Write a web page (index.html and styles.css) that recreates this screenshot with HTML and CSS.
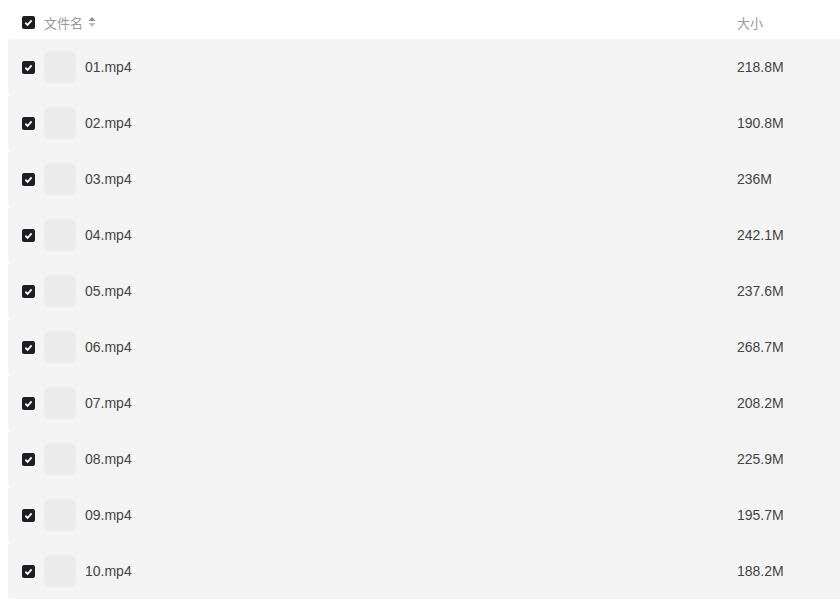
FILE: index.html
```html
<!DOCTYPE html>
<html lang="zh-CN">
<head>
    <meta charset="UTF-8">
    <title>文件列表</title>
    <link rel="stylesheet" href="styles.css">
</head>
<body>
    <div class="file-table">
        <div class="table-head">
            <span class="check"><svg viewBox="0 0 10 10"><path d="M2.6 5.2 L4.3 6.8 L7.4 3.4" /></svg></span>
            <div class="name-col">
                <span>文件名</span>
                <svg class="sort" viewBox="0 0 8 12"><path d="M4 1 L7.5 5 L0.5 5 Z" fill="#8f8f8f"/><path d="M4 11 L7.5 7 L0.5 7 Z" fill="#bdbdbd"/></svg>
            </div>
            <div class="size-col">大小</div>
        </div>

        <div class="rows">
            <div class="row"><span class="check"><svg viewBox="0 0 10 10"><path d="M2.6 5.2 L4.3 6.8 L7.4 3.4" /></svg></span><div class="name-col"><span class="thumb"></span><span class="fname">01.mp4</span></div><div class="size-col">218.8M</div></div>
            <div class="row"><span class="check"><svg viewBox="0 0 10 10"><path d="M2.6 5.2 L4.3 6.8 L7.4 3.4" /></svg></span><div class="name-col"><span class="thumb"></span><span class="fname">02.mp4</span></div><div class="size-col">190.8M</div></div>
            <div class="row"><span class="check"><svg viewBox="0 0 10 10"><path d="M2.6 5.2 L4.3 6.8 L7.4 3.4" /></svg></span><div class="name-col"><span class="thumb"></span><span class="fname">03.mp4</span></div><div class="size-col">236M</div></div>
            <div class="row"><span class="check"><svg viewBox="0 0 10 10"><path d="M2.6 5.2 L4.3 6.8 L7.4 3.4" /></svg></span><div class="name-col"><span class="thumb"></span><span class="fname">04.mp4</span></div><div class="size-col">242.1M</div></div>
            <div class="row"><span class="check"><svg viewBox="0 0 10 10"><path d="M2.6 5.2 L4.3 6.8 L7.4 3.4" /></svg></span><div class="name-col"><span class="thumb"></span><span class="fname">05.mp4</span></div><div class="size-col">237.6M</div></div>
            <div class="row"><span class="check"><svg viewBox="0 0 10 10"><path d="M2.6 5.2 L4.3 6.8 L7.4 3.4" /></svg></span><div class="name-col"><span class="thumb"></span><span class="fname">06.mp4</span></div><div class="size-col">268.7M</div></div>
            <div class="row"><span class="check"><svg viewBox="0 0 10 10"><path d="M2.6 5.2 L4.3 6.8 L7.4 3.4" /></svg></span><div class="name-col"><span class="thumb"></span><span class="fname">07.mp4</span></div><div class="size-col">208.2M</div></div>
            <div class="row"><span class="check"><svg viewBox="0 0 10 10"><path d="M2.6 5.2 L4.3 6.8 L7.4 3.4" /></svg></span><div class="name-col"><span class="thumb"></span><span class="fname">08.mp4</span></div><div class="size-col">225.9M</div></div>
            <div class="row"><span class="check"><svg viewBox="0 0 10 10"><path d="M2.6 5.2 L4.3 6.8 L7.4 3.4" /></svg></span><div class="name-col"><span class="thumb"></span><span class="fname">09.mp4</span></div><div class="size-col">195.7M</div></div>
            <div class="row"><span class="check"><svg viewBox="0 0 10 10"><path d="M2.6 5.2 L4.3 6.8 L7.4 3.4" /></svg></span><div class="name-col"><span class="thumb"></span><span class="fname">10.mp4</span></div><div class="size-col">188.2M</div></div>
        </div>
    </div>
</body>
</html>
```

FILE: styles.css
```css
body {
    margin: 0;
    background-color: #ffffff;
    font-family: "Liberation Sans", "Noto Sans CJK SC", sans-serif;
    overflow: hidden;
}

.file-table {
    padding-left: 8px;
    width: 860px;
}

.table-head {
    display: flex;
    align-items: center;
    height: 39px;
    padding-left: 14px;
    padding-top: 5px;
    box-sizing: border-box;
    font-size: 13px;
    color: #999;
}

.check {
    width: 13px;
    height: 13px;
    border-radius: 2px;
    background-color: #1e1e22;
    display: flex;
    flex-shrink: 0;
}

.check svg {
    width: 13px;
    height: 13px;
    fill: none;
    stroke: white;
    stroke-width: 1.4;
}

.name-col {
    display: flex;
    align-items: center;
    gap: 5px;
    margin-left: 9px;
    width: 693px;
}

.sort {
    width: 8px;
    height: 12px;
}

.size-col {
    flex-grow: 1;
}

.rows {
    display: flex;
    flex-direction: column;
}

.row {
    display: flex;
    align-items: center;
    height: 56px;
    padding-left: 14px;
    background-color: #f4f4f4;
    border-radius: 4px;
    font-size: 14px;
    color: #444;
}

.row .name-col {
    gap: 9px;
}

.thumb {
    width: 32px;
    height: 32px;
    border-radius: 7px;
    background-color: #ebebeb;
}
```
